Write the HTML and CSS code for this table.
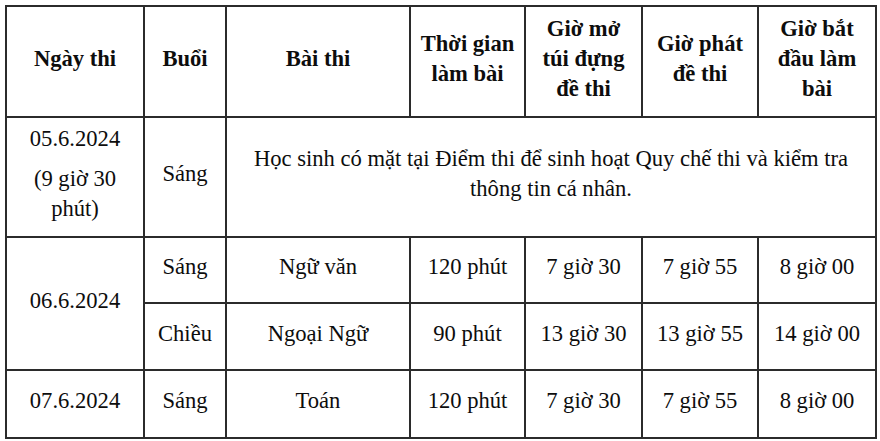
FILE: index.html
```html
<!DOCTYPE html>
<html lang="vi">
<head>
<meta charset="utf-8">
<title>Lịch thi</title>
<link rel="stylesheet" href="styles.css">
</head>
<body>
<table class="schedule">
  <colgroup>
    <col class="c-date">
    <col class="c-session">
    <col class="c-subject">
    <col class="c-duration">
    <col class="c-open">
    <col class="c-hand">
    <col class="c-start">
  </colgroup>
  <thead>
    <tr class="r-head">
      <th>Ngày thi</th>
      <th>Buổi</th>
      <th>Bài thi</th>
      <th>Thời gian<br>làm bài</th>
      <th>Giờ mở<br>túi đựng<br>đề thi</th>
      <th>Giờ phát<br>đề thi</th>
      <th>Giờ bắt<br>đầu làm<br>bài</th>
    </tr>
  </thead>
  <tbody>
    <tr class="r-intro">
      <td><p class="date-main">05.6.2024</p><p class="date-note">(9 giờ 30<br>phút)</p></td>
      <td>Sáng</td>
      <td colspan="5">Học sinh có mặt tại Điểm thi để sinh hoạt Quy chế thi và kiểm tra<br>thông tin cá nhân.</td>
    </tr>
    <tr class="r-a">
      <td rowspan="2">06.6.2024</td>
      <td>Sáng</td>
      <td>Ngữ văn</td>
      <td>120 phút</td>
      <td>7 giờ 30</td>
      <td>7 giờ 55</td>
      <td>8 giờ 00</td>
    </tr>
    <tr class="r-b">
      <td>Chiều</td>
      <td>Ngoại Ngữ</td>
      <td>90 phút</td>
      <td>13 giờ 30</td>
      <td>13 giờ 55</td>
      <td>14 giờ 00</td>
    </tr>
    <tr class="r-c">
      <td>07.6.2024</td>
      <td>Sáng</td>
      <td>Toán</td>
      <td>120 phút</td>
      <td>7 giờ 30</td>
      <td>7 giờ 55</td>
      <td>8 giờ 00</td>
    </tr>
  </tbody>
</table>
</body>
</html>
```

FILE: styles.css
```css
html, body {
  margin: 0;
  padding: 0;
  background: #ffffff;
}

body {
  font-family: "Liberation Serif", "Times New Roman", serif;
  color: #0d0d0d;
}

.schedule {
  margin: 5px 0 0 5px;
  width: 870px;
  table-layout: fixed;
  border-collapse: collapse;
  border: 2px solid #2b2b2b;
  font-size: 22.6px;
  line-height: 30px;
}

.c-date { width: 138px; }
.c-session { width: 82px; }
.c-subject { width: 184px; }
.c-duration { width: 115px; }
.c-open { width: 117px; }
.c-hand { width: 116px; }
.c-start { width: 118px; }

.schedule th,
.schedule td {
  border: 2px solid #2b2b2b;
  padding: 0 4px 6px;
  text-align: center;
  vertical-align: middle;
}

.schedule th {
  font-weight: bold;
}

.schedule td {
  font-weight: normal;
}

.r-head { height: 111px; }
.r-intro { height: 120px; }
.r-a { height: 66px; }
.r-b { height: 67px; }
.r-c { height: 68px; }

.date-main {
  margin: 0 0 10px;
}

.date-note {
  margin: 0;
}
```
